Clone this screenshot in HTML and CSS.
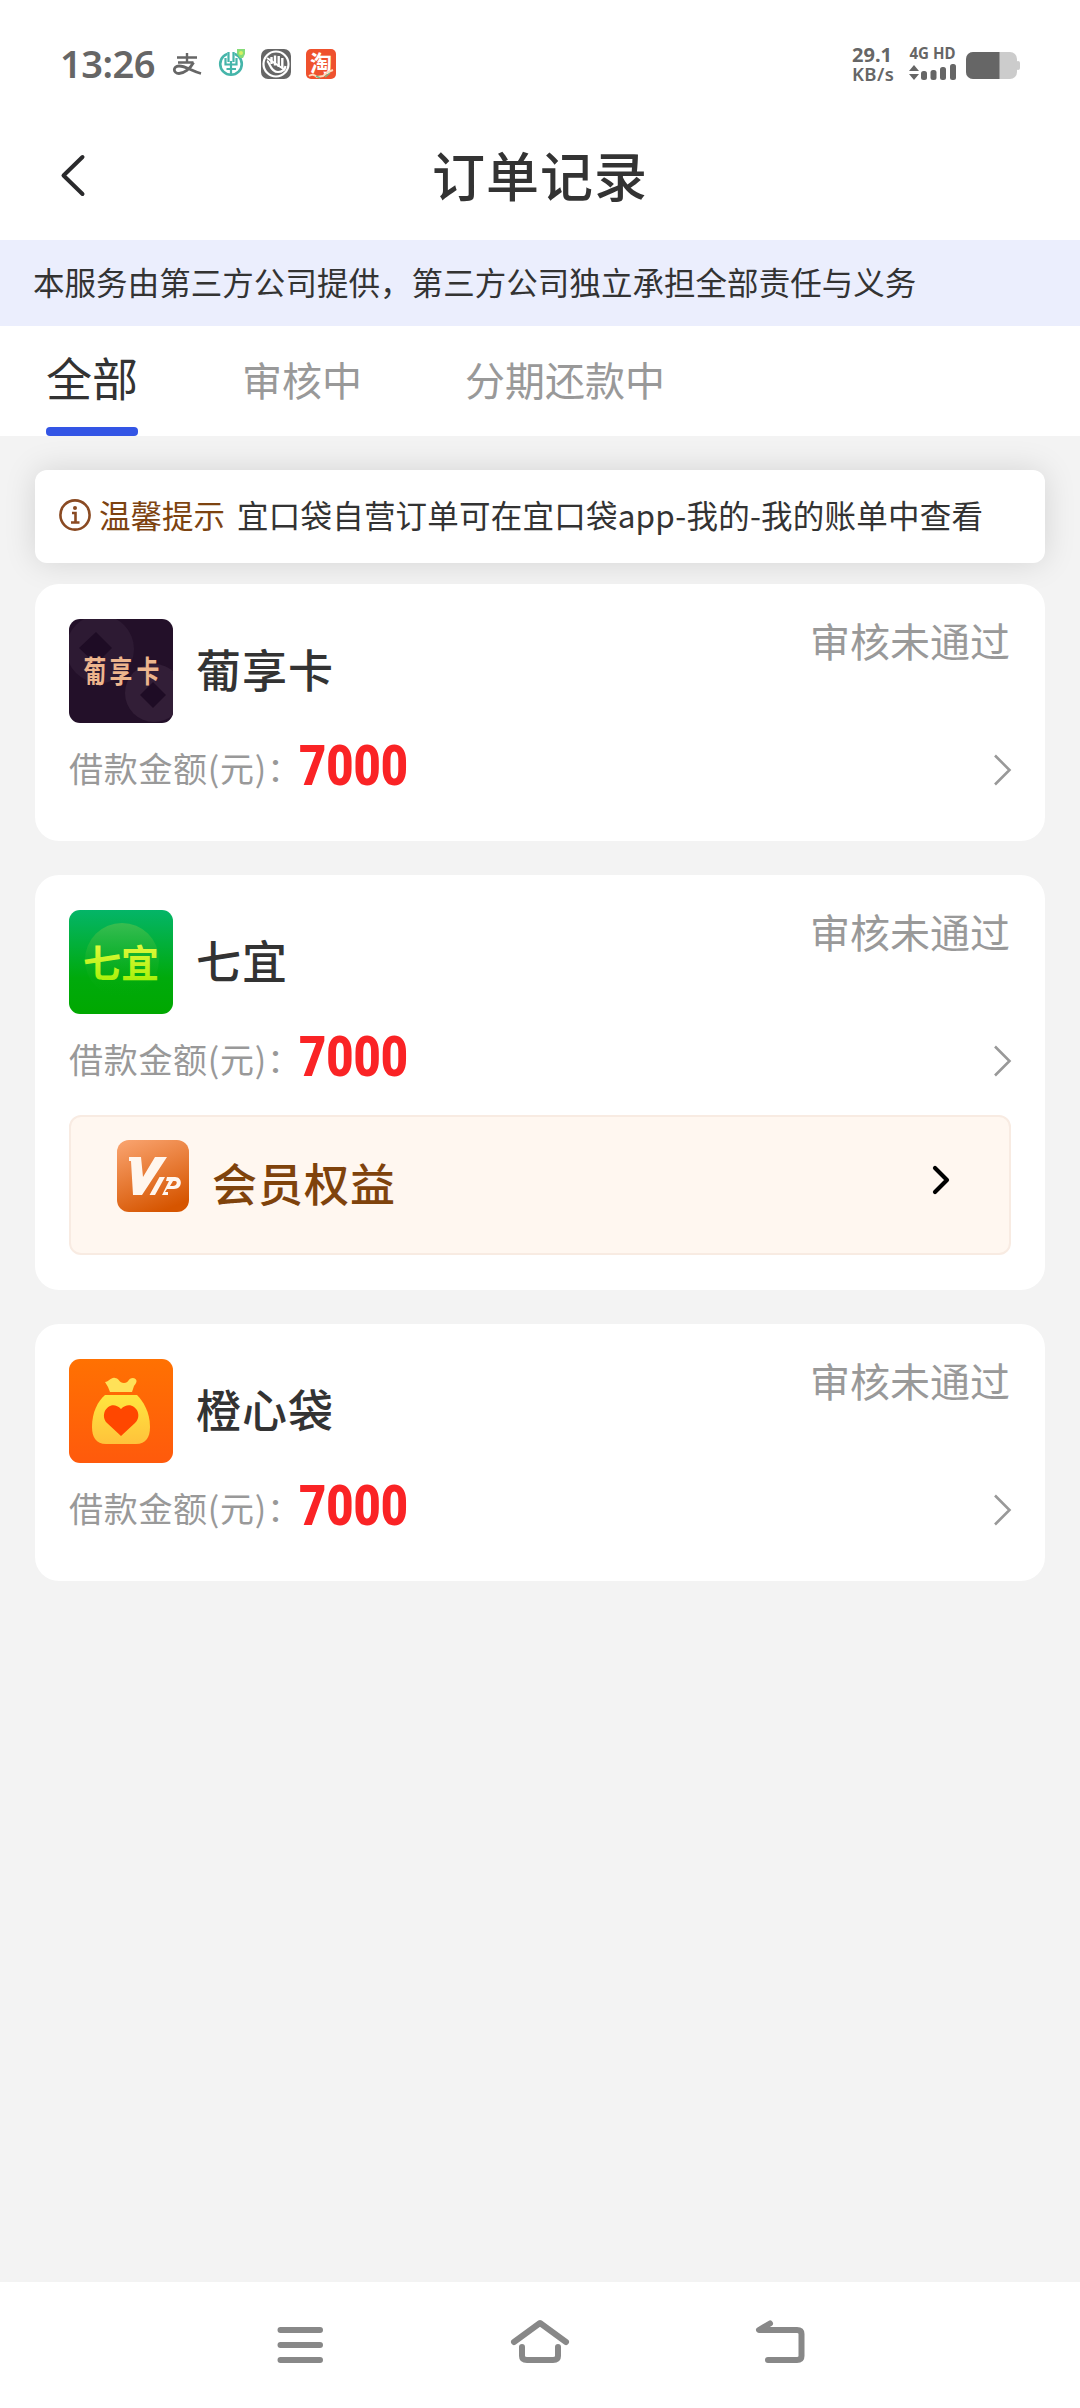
FILE: index.html
```html
<!DOCTYPE html>
<html lang="zh-CN">
<head>
<meta charset="utf-8">
<title>订单记录</title>
<link rel="stylesheet" href="styles.css">
</head>
<body>
<div class="screen">
  <header class="status-bar">
    <span class="clock">13:26</span>
    <svg class="tray" width="164" height="40" viewBox="172 44 164 40">
      <g fill="none" stroke="#666" stroke-width="2.4">
        <path d="M177 57.500H197M187 53V62.500M178 62.500H193.500"/>
        <path d="M193.500 62.500C190 69 184 73.500 179 73.500C173 73.500 172.500 66 179 66C186 66 191 71 201 73.500" stroke-width="2.800"/>
      </g>
      <circle cx="231" cy="64" r="10.800" fill="none" stroke="#45b5aa" stroke-width="2.600"/>
      <path d="M227.500 52h7v8h-7z" fill="#fff"/>
      <path d="M228.500 52v10M233.500 52v10M225.500 58v6.500h11V58M226.500 69h9.500M231 61v14" stroke="#45b5aa" stroke-width="2.200" fill="none"/>
      <path d="M237 49h8v5l-2 4h-3l-3-4z" fill="#86dc78"/><circle cx="241" cy="53" r="2" fill="#d8ef65"/>
      <rect x="261" y="49" width="30" height="30" rx="7" fill="#666"/>
      <circle cx="276" cy="64" r="12.500" fill="none" stroke="#fff" stroke-width="2.200"/>
      <path d="M267 61C270 62 270 72 278 72C283 72 285 69 285.500 66" fill="none" stroke="#fff" stroke-width="2.200"/>
      <path d="M271.500 57v7M275 55.500v10M278.700 56v11M282.300 58v10" stroke="#fff" stroke-width="2.400"/>
      <path d="M267 58L285 70" stroke="#fff" stroke-width="2"/>
      <rect x="306" y="49" width="30" height="30" rx="5" fill="#ef512d"/>
      <text x="310" y="71" class="tray-glyph">淘</text>
      <path d="M309 76q4-3 8 1l6-1 5-4 5-2" fill="none" stroke="#ffd9b8" stroke-width="2"/>
      <path d="M316 76l4 2M325 77l5-4" stroke="#7ab58a" stroke-width="1.500"/>
    </svg>
    <div class="speed"><span>29.1</span><span class="unit">KB/s</span></div>
    <svg class="signal" width="48" height="42" viewBox="909 43 48 42">
      <text x="909.500" y="59" class="net" textLength="46" lengthAdjust="spacingAndGlyphs">4G HD</text>
      <g fill="#666">
        <path d="M914 65l5 6h-10zM909 74h10l-5 6z"/>
        <rect x="921" y="71" width="6" height="9" rx="2.500"/><rect x="930.500" y="70" width="6" height="10" rx="2.500"/>
        <rect x="940" y="67" width="6" height="13" rx="2.500"/><rect x="950" y="64" width="6" height="16" rx="2.500"/>
      </g>
    </svg>
    <svg class="battery" width="54" height="27" viewBox="0 0 54 27">
      <rect width="51" height="27" rx="7" fill="#ccc"/><rect x="50" y="9" width="4" height="9" rx="2" fill="#ccc"/>
      <path d="M7 0H33.500V27H7a7 7 0 0 1-7-7V7a7 7 0 0 1 7-7z" fill="#666"/>
    </svg>
  </header>

  <div class="title-bar">
    <svg class="back" width="28" height="46" viewBox="0 0 28 46"><path d="M23.500 5L4.500 23.500L23.500 42" fill="none" stroke="#2a2a2c" stroke-width="4" stroke-linecap="round" stroke-linejoin="round"/></svg>
    <h1>订单记录</h1>
  </div>

  <p class="banner">本服务由第三方公司提供，第三方公司独立承担全部责任与义务</p>

  <nav class="tabs">
    <div class="tab active"><span>全部</span></div>
    <div class="tab">审核中</div>
    <div class="tab">分期还款中</div>
  </nav>

  <main>
    <div class="notice">
      <svg width="32" height="32" viewBox="0 0 32 32"><circle cx="16" cy="16" r="14.600" fill="none" stroke="#8a4a22" stroke-width="2.600"/><circle cx="16" cy="9" r="2" fill="#8a4a22"/><path d="M13 14h3.500v9M12 23.500h8.500" fill="none" stroke="#8a4a22" stroke-width="2.600"/></svg>
      <span class="tip">温馨提示</span>
      <span class="msg">宜口袋自营订单可在宜口袋app-我的-我的账单中查看</span>
    </div>

    <section class="card">
      <div class="head">
        <svg class="logo" viewBox="0 0 104 104">
          <rect width="104" height="104" fill="#231029"/>
          <circle cx="31" cy="30" r="34" fill="#2d1a33"/><path d="M27 13L43 29 27 45 10 29z" fill="#1e0c25"/>
          <circle cx="85" cy="74" r="29" fill="#321e37"/><path d="M84 63L97 76 84 89 71 76z" fill="#1e0c25"/>
          <g class="logo-grape" text-anchor="middle">
            <text transform="translate(26 63) scale(.76 1)">葡</text>
            <text transform="translate(52 63) scale(.76 1)">享</text>
            <text transform="translate(79 63) scale(.76 1)">卡</text>
          </g>
        </svg>
        <h2>葡享卡</h2>
        <span class="state">审核未通过</span>
      </div>
      <div class="amount"><span class="label">借款金额(元)：</span><b>7000</b>
        <svg class="more" width="20" height="34" viewBox="0 0 20 34"><path d="M3 2.500L17.500 17L3 31.500" fill="none" stroke="#999" stroke-width="2.600"/></svg></div>
    </section>

    <section class="card">
      <div class="head">
        <svg class="logo" viewBox="0 0 104 104">
          <defs>
            <linearGradient id="leaf" x2="0" y2="1"><stop stop-color="#04b568"/><stop offset=".65" stop-color="#00aa0c"/><stop offset="1" stop-color="#00a800"/></linearGradient>
            <linearGradient id="halo" x2="0" y2="1"><stop stop-color="#38bd50"/><stop offset="1" stop-color="#00aa08" stop-opacity="0"/></linearGradient>
            <linearGradient id="lime" x2="0" y2="1"><stop stop-color="#f3fb4c"/><stop offset="1" stop-color="#9df000"/></linearGradient>
          </defs>
          <rect width="104" height="104" fill="url(#leaf)"/><circle cx="53" cy="50" r="37" fill="url(#halo)"/>
          <text x="14" y="67" class="logo-seven" fill="url(#lime)" textLength="76">七宜</text>
        </svg>
        <h2>七宜</h2>
        <span class="state">审核未通过</span>
      </div>
      <div class="amount"><span class="label">借款金额(元)：</span><b>7000</b>
        <svg class="more" width="20" height="34" viewBox="0 0 20 34"><path d="M3 2.500L17.500 17L3 31.500" fill="none" stroke="#999" stroke-width="2.600"/></svg></div>
      <div class="benefit">
        <svg class="vip" width="72" height="72" viewBox="0 0 72 72">
          <defs><linearGradient id="amber" x1=".2" x2=".6" y2="1"><stop stop-color="#f8a06a"/><stop offset="1" stop-color="#d65500"/></linearGradient></defs>
          <rect width="72" height="72" rx="12" fill="url(#amber)"/>
          <path d="M12 17H24L26 37L38 17H50L25 55H16L14 21H12z" fill="#fff6ee"/>
          <path d="M42.500 37H48L38 55H32.500zM50 37H58C66 37 66 49 57 49H50L48 52H51V55H45L52 41H49zM56 41L53 46H56C60 46 61 41 58 41z" fill="#fff6ee" fill-rule="evenodd"/>
        </svg>
        <span>会员权益</span>
        <svg class="go" width="20" height="32" viewBox="0 0 20 32"><path d="M4 4L16 16L4 28" fill="none" stroke="#000" stroke-width="4.200" stroke-linecap="round" stroke-linejoin="round"/></svg>
      </div>
    </section>

    <section class="card">
      <div class="head">
        <svg class="logo" viewBox="0 0 104 104">
          <defs>
            <linearGradient id="orange" x2="0" y2="1"><stop stop-color="#ff7102"/><stop offset="1" stop-color="#ff5a0c"/></linearGradient>
            <linearGradient id="gold" x2="0" y2="1"><stop stop-color="#ffe63f"/><stop offset="1" stop-color="#ffc23b"/></linearGradient>
          </defs>
          <rect width="104" height="104" fill="url(#orange)"/>
          <path d="M36 23C40 23 42 18 46 19C50 19 50 24 55 24C60 24 59 19 64 19C70 20 67 25 65 27L63 33H41L39 28z" fill="#ffe158"/>
          <path d="M36 36H68C74 42 81 53 81 68C81 78 77 85 67 85H37C27 85 23 78 23 68C23 53 29 42 36 36z" fill="url(#gold)"/>
          <path d="M52 77L38 64C29 54 42 39 52 50C62 39 76 54 66 64z" fill="#ff4700"/>
        </svg>
        <h2>橙心袋</h2>
        <span class="state">审核未通过</span>
      </div>
      <div class="amount"><span class="label">借款金额(元)：</span><b>7000</b>
        <svg class="more" width="20" height="34" viewBox="0 0 20 34"><path d="M3 2.500L17.500 17L3 31.500" fill="none" stroke="#999" stroke-width="2.600"/></svg></div>
    </section>
  </main>

  <footer class="nav-bar">
    <svg width="60" height="50" viewBox="270 2317 60 50"><path d="M280.500 2330H320M280.500 2345H320M280.500 2360H320"/></svg>
    <svg width="60" height="50" viewBox="510 2317 60 50"><path d="M514 2342L540 2323L566 2342M522 2347V2356Q522 2360 527 2360H553Q558 2360 558 2356V2347"/></svg>
    <svg width="60" height="50" viewBox="750 2317 60 50"><path d="M770 2323.500L759 2330H797Q801.500 2330 801.500 2334V2356Q801.500 2360 797 2360H768"/></svg>
  </footer>
</div>
</body>
</html>
```
FILE: styles.css
```css
* { box-sizing: border-box; }
body, h1, h2, p { margin: 0; }
body { font-family: "Noto Sans CJK SC", "Noto Sans", sans-serif; color: #333; background: #f3f3f3; }
svg { display: block; flex: none; }
.screen { width: 1080px; height: 2408px; display: flex; flex-direction: column; background: #f3f3f3; overflow: hidden; }

.status-bar { height: 128px; background: #fff; display: flex; align-items: center; padding: 0 60px 0 60px; }
.clock { width: 112px; font: 600 38px/40px "Noto Sans", sans-serif; color: #666; letter-spacing: -.5px; white-space: nowrap; margin-bottom: 2px; }
.tray-glyph { font-size: 22px; font-weight: 700; fill: #fff; }
.speed { margin-left: auto; width: 57px; display: flex; flex-direction: column; font: 700 20px/20px "Noto Sans", sans-serif; color: #666; }
.speed .unit { font-size: 18.500px; font-weight: 600; line-height: 18px; letter-spacing: .4px; }
.net { font: 700 16px "Noto Sans", sans-serif; fill: #666; }
.battery { margin-left: 9px; margin-top: 3px; }

.title-bar { height: 112px; background: #fff; display: grid; grid-template-columns: 160px 1fr 160px; align-items: center; padding-bottom: 18px; }
.back { margin-left: 59px; }
.title-bar h1 { font-size: 53px; font-weight: 500; line-height: 60px; letter-spacing: 1px; text-align: center; margin-bottom: 3px; }

.banner { height: 86px; padding-left: 33px; background: #ebeefd; font-size: 31.500px; line-height: 83px; letter-spacing: .05px; white-space: nowrap; }
.tabs { height: 110px; background: #fff; display: flex; padding-left: 46px; }
.tab { font-size: 40px; line-height: 107px; color: #999; margin-right: 103px; white-space: nowrap; }
.tab.active { width: 92px; margin-right: 104px; font-size: 46px; line-height: 101px; color: #333; display: flex; flex-direction: column; }
.tab.active span { height: 101px; }
.tab.active::after { content: ""; height: 9px; border-radius: 4px; background: #3355e5; }

main { flex: 1; padding: 34px 35px 0; display: flex; flex-direction: column; }
.notice { height: 93px; flex: none; margin-bottom: 21px; padding: 0 24px 4px; display: flex; align-items: center; background: #fff; border-radius: 12px; box-shadow: 0 0 32px rgba(0,0,0,.13); font-size: 31.500px; line-height: 46px; white-space: nowrap; }
.notice span { margin-bottom: 2px; }
.tip { margin-left: 8px; color: #7d4310; }
.msg { margin-left: 12px; letter-spacing: .22px; }

.card { flex: none; height: 257px; margin-bottom: 34px; padding: 35px 34px; background: #fff; border-radius: 24px; }
.card:has(.benefit) { height: 415px; }
.head { height: 104px; display: flex; align-items: center; }
.logo { width: 104px; height: 104px; border-radius: 11px; }
.logo-grape { font-size: 30px; font-weight: 700; fill: #edb58d; }
.logo-seven { font-size: 38px; font-weight: 700; }
h2 { margin-left: 23px; margin-bottom: 5px; font-size: 45px; line-height: 60px; font-weight: 500; letter-spacing: 1px; }
.state { margin-left: auto; margin-right: 1px; margin-top: -2px; align-self: flex-start; font-size: 40px; line-height: 46px; color: #999; }
.amount { height: 92px; display: flex; align-items: center; }
.label { font-size: 34px; line-height: 50px; letter-spacing: .7px; color: #999; width: 230px; margin-bottom: 3px; white-space: nowrap; }
.amount b { font: 900 56px/60px Roboto, sans-serif; color: #fa2325; transform: scaleX(.84); transform-origin: 0 50%; margin-bottom: 6px; }
.more { margin-left: auto; margin-top: 2px; margin-right: -1px; }
.benefit { height: 140px; margin-top: 9px; padding: 0 58px 0 46px; display: flex; align-items: center; background: #fff7f0; border: 2px solid #f8ebe2; border-radius: 12px; }
.vip { margin-bottom: 18px; }
.benefit span { margin-left: 23px; margin-bottom: 5px; font-size: 45px; font-weight: 500; line-height: 60px; letter-spacing: 1px; color: #7f430c; }
.go { margin-left: auto; margin-bottom: 10px; }

.nav-bar { height: 126px; flex: none; background: #fff; display: flex; justify-content: center; gap: 180px; padding-top: 35px; }
.nav-bar path { fill: none; stroke: #888; stroke-width: 6; stroke-linecap: round; stroke-linejoin: round; }
```
